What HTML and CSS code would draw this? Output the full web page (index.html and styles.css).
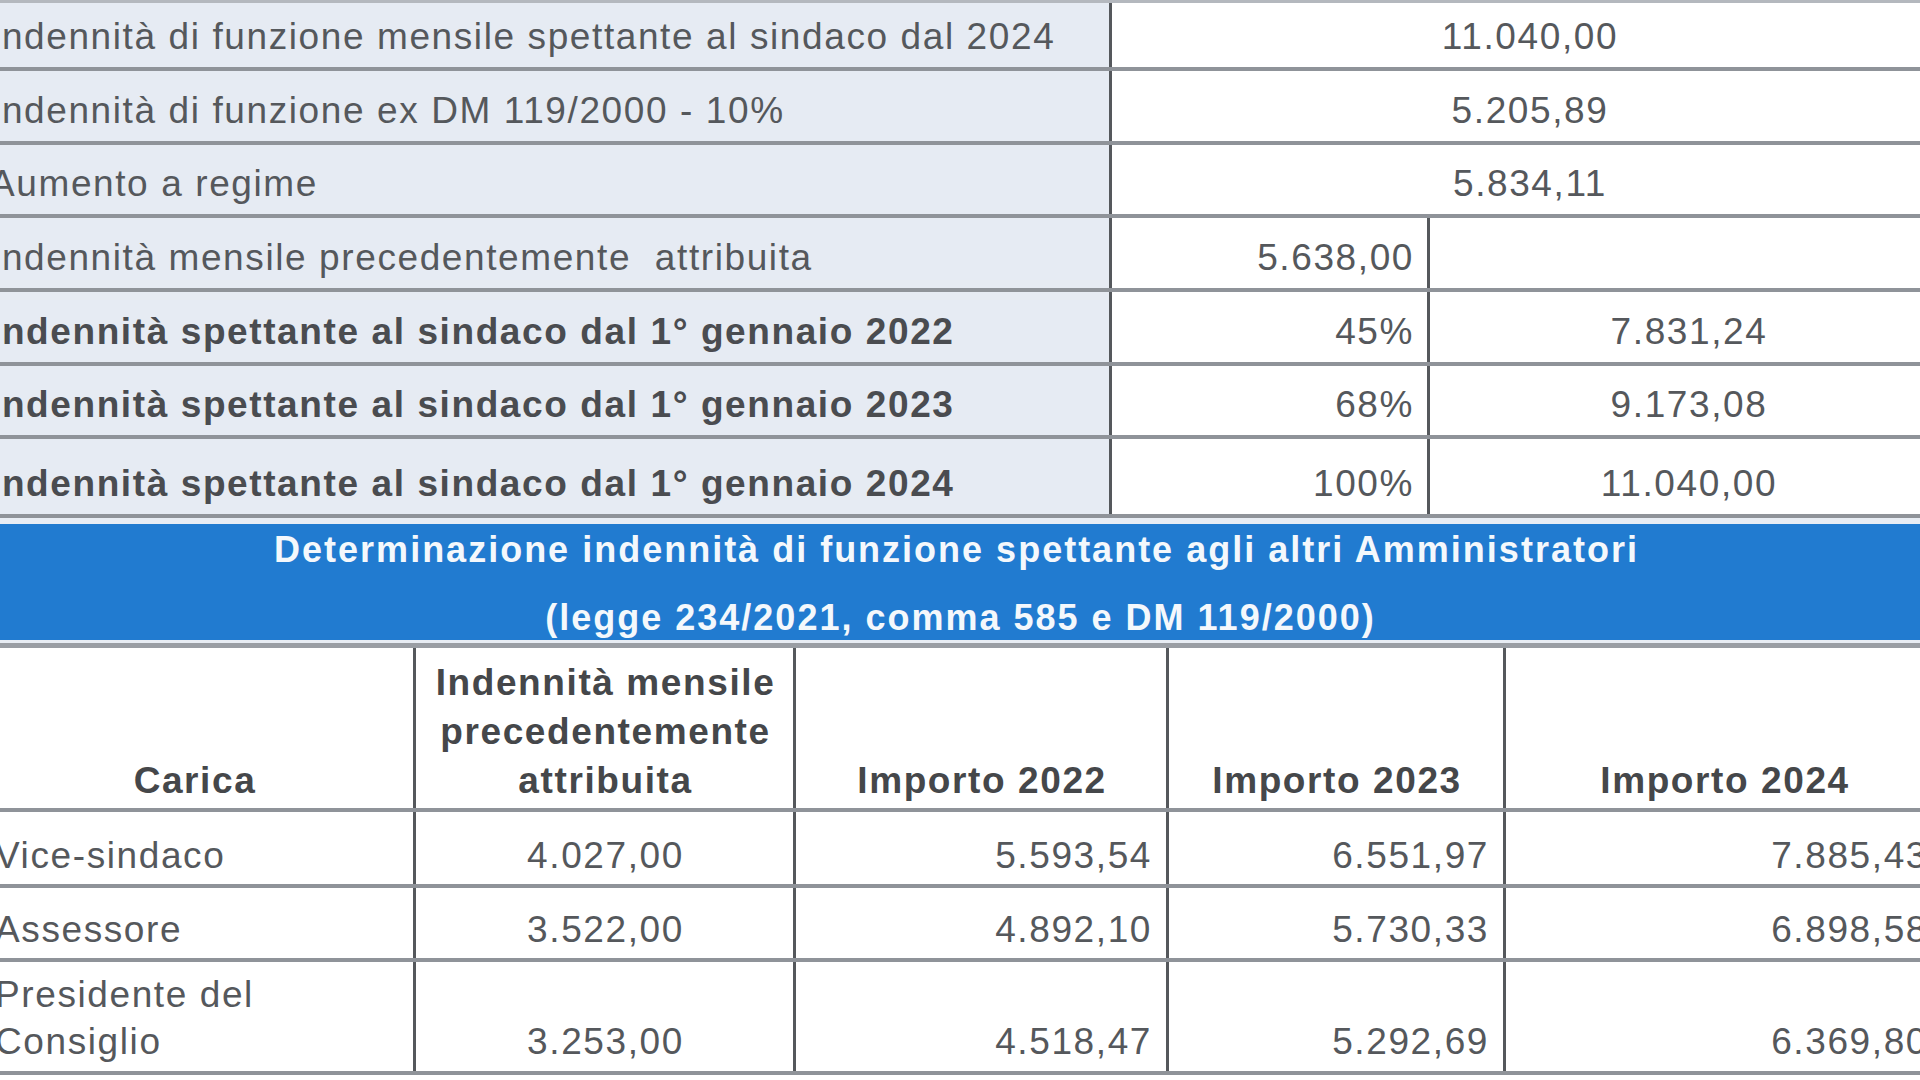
FILE: index.html
```html
<!DOCTYPE html>
<html lang="it">
<head>
<meta charset="utf-8">
<title>Indennità di funzione</title>
<link rel="stylesheet" href="styles.css">
</head>
<body>
<div class="sheet">
  <div class="top">
    <div class="row r1">
      <div class="cell label">Indennità di funzione mensile spettante al sindaco dal 2024</div>
      <div class="cell val span center">11.040,00</div>
    </div>
    <div class="row r2">
      <div class="cell label">Indennità di funzione ex DM 119/2000 - 10%</div>
      <div class="cell val span center">5.205,89</div>
    </div>
    <div class="row r3">
      <div class="cell label">Aumento a regime</div>
      <div class="cell val span center">5.834,11</div>
    </div>
    <div class="row r4">
      <div class="cell label">Indennità mensile precedentemente&nbsp; attribuita</div>
      <div class="cell val right vline">5.638,00</div>
      <div class="cell val"></div>
    </div>
    <div class="row r5">
      <div class="cell label bold">Indennità spettante al sindaco dal 1° gennaio 2022</div>
      <div class="cell val right vline">45%</div>
      <div class="cell val center">7.831,24</div>
    </div>
    <div class="row r6">
      <div class="cell label bold">Indennità spettante al sindaco dal 1° gennaio 2023</div>
      <div class="cell val right vline">68%</div>
      <div class="cell val center">9.173,08</div>
    </div>
    <div class="row r7">
      <div class="cell label bold">Indennità spettante al sindaco dal 1° gennaio 2024</div>
      <div class="cell val right vline">100%</div>
      <div class="cell val center">11.040,00</div>
    </div>
  </div>

  <div class="band">
    <div class="band-inner">
      <div class="band-l1">Determinazione indennità di funzione spettante agli altri Amministratori</div>
      <div class="band-l2">(legge 234/2021, comma 585 e DM 119/2000)</div>
    </div>
  </div>

  <div class="bottom">
    <div class="brow head">
      <div class="bcell c1 center">Carica</div>
      <div class="bcell center">Indennità mensile precedentemente attribuita</div>
      <div class="bcell center">Importo 2022</div>
      <div class="bcell center">Importo 2023</div>
      <div class="bcell center">Importo 2024</div>
    </div>
    <div class="brow d1">
      <div class="bcell c1">Vice-sindaco</div>
      <div class="bcell center">4.027,00</div>
      <div class="bcell right">5.593,54</div>
      <div class="bcell right">6.551,97</div>
      <div class="bcell right">7.885,43</div>
    </div>
    <div class="brow d2">
      <div class="bcell c1">Assessore</div>
      <div class="bcell center">3.522,00</div>
      <div class="bcell right">4.892,10</div>
      <div class="bcell right">5.730,33</div>
      <div class="bcell right">6.898,58</div>
    </div>
    <div class="brow d3">
      <div class="bcell c1">Presidente del Consiglio</div>
      <div class="bcell center">3.253,00</div>
      <div class="bcell right">4.518,47</div>
      <div class="bcell right">5.292,69</div>
      <div class="bcell right">6.369,80</div>
    </div>
  </div>
</div>
</body>
</html>
```

FILE: styles.css
```css
html, body {
  margin: 0;
  padding: 0;
  background: #ffffff;
  overflow: hidden;
}

body {
  width: 1920px;
  height: 1080px;
  font-family: "Liberation Sans", Arial, sans-serif;
  color: #55585c;
}

.sheet {
  width: 1963px;
  margin-left: -15px;
}

/* ---------- top table ---------- */
.top {
  border-top: 3px solid #b4b8be;
}

.row {
  display: grid;
  grid-template-columns: 1127px 318px 1fr;
  box-sizing: border-box;
  border-bottom: 4px solid #8f9399;
}

.r1 { height: 68px; }
.r2 { height: 74px; }
.r3 { height: 73px; }
.r4 { height: 74px; }
.r5 { height: 74px; }
.r6 { height: 73px; }
.r7 { height: 79px; }

.cell {
  display: flex;
  align-items: flex-end;
  font-size: 37px;
  line-height: 40px;
  letter-spacing: 1.6px;
  padding: 0 13px 10px;
  white-space: nowrap;
}

.label {
  background: #e6ebf3;
  padding-left: 5px;
  border-right: 3px solid #55585c;
}

.bold {
  font-weight: bold;
  color: #4a4c50;
}

.val {
  background: #ffffff;
}

.span {
  grid-column: 2 / 4;
}

.vline {
  border-right: 3px solid #55585c;
}

.center { justify-content: center; }
.right { justify-content: flex-end; }

/* ---------- band ---------- */
.band {
  background: #e8edf4;
  padding: 6px 0 3px;
  border-bottom: 5px solid #9a9ea4;
}

.band-inner {
  background: #217bd0;
  height: 116px;
  box-sizing: border-box;
  color: #f4f8fc;
  font-weight: bold;
  font-size: 36px;
  letter-spacing: 2px;
  text-align: center;
  padding-right: 24px;
}

.band-l1 {
  line-height: 52px;
  padding-left: 4px;
}

.band-l2 {
  line-height: 32px;
  margin-top: 26px;
  padding-left: 12px;
}

/* ---------- bottom table ---------- */
.brow {
  display: grid;
  grid-template-columns: 431px 380px 373px 337px 1fr;
  box-sizing: border-box;
  border-bottom: 4px solid #8f9399;
}

.head { height: 164px; }
.d1 { height: 76px; }
.d2 { height: 74px; }
.d3 { height: 113px; }

.bcell {
  display: flex;
  align-items: flex-end;
  font-size: 37px;
  letter-spacing: 1.6px;
  line-height: 44px;
  padding: 0 14px 6px 16px;
  border-right: 3px solid #55585c;
  white-space: nowrap;
}

.bcell:last-child {
  border-right: none;
  padding-right: 20px;
}

.bcell.c1 {
  padding-left: 10px;
  white-space: normal;
}

.head .bcell {
  font-weight: bold;
  color: #45474a;
  line-height: 49px;
  padding-bottom: 3px;
  white-space: normal;
  text-align: center;
}

.head .bcell.c1 {
  padding-left: 6px;
}

.d3 .bcell {
  line-height: 47px;
  padding-bottom: 6px;
}
```
